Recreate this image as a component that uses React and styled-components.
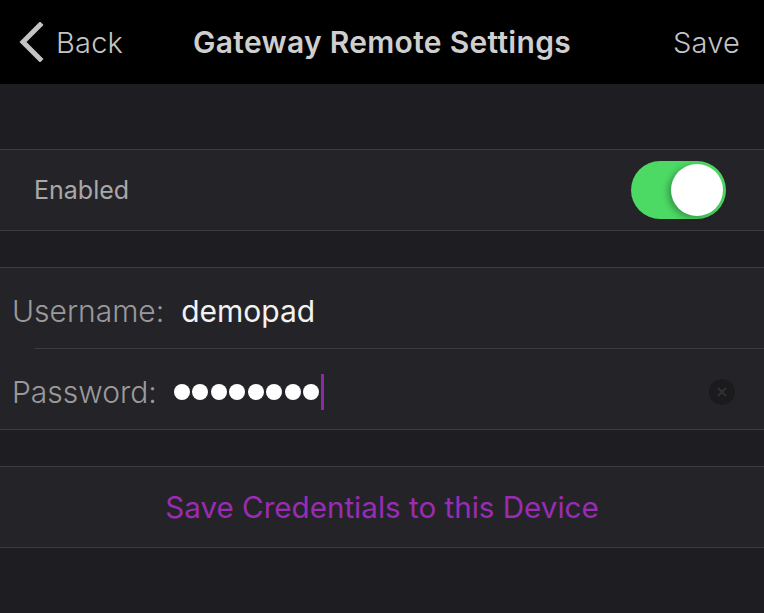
import styled, { createGlobalStyle } from "styled-components";

const GlobalStyle = createGlobalStyle`
  html, body {
    margin: 0;
    padding: 0;
    background: #1e1e22;
    font-family: "Inter", "Liberation Sans", sans-serif;
  }
`;

const Screen = styled.div`
  width: 764px;
  height: 613px;
  overflow: hidden;
  background: #1e1e22;
  display: flex;
  flex-direction: column;
`;

const NavBar = styled.div`
  height: 84px;
  background: #000;
  display: flex;
  align-items: center;
  justify-content: space-between;
  padding: 0 24px 0 18px;
  position: relative;
  color: #c4c4c4;
`;

const NavButton = styled.div`
  display: flex;
  align-items: center;
  gap: 12px;
  font-size: 29px;
  font-weight: 300;
  letter-spacing: 0.2px;
`;

const Title = styled.div`
  position: absolute;
  left: 0;
  right: 0;
  text-align: center;
  font-size: 30px;
  font-weight: 600;
  letter-spacing: 0.3px;
  color: #cfcfcf;
  pointer-events: none;
`;

const Group = styled.div`
  margin-top: ${({ gap }) => gap}px;
  background: #242428;
  border-top: 1px solid #3c3c40;
  border-bottom: 1px solid #3c3c40;
`;

const Row = styled.div`
  height: 80px;
  box-sizing: border-box;
  display: flex;
  align-items: center;
  padding: ${({ pad }) => pad || "0 12px"};
  justify-content: ${({ center }) => (center ? "center" : "flex-start")};
`;

const Separator = styled.div`
  height: 1px;
  margin-left: 34px;
  background: #3c3c40;
`;

const CellLabel = styled.span`
  font-size: 25px;
  color: #a8a8a8;
  flex: 1;
`;

const FieldLabel = styled.span`
  font-size: 30px;
  font-weight: 300;
  color: #9a9a9e;
  margin-right: ${({ space }) => space}px;
`;

const FieldValue = styled.span`
  font-size: 30px;
  color: #f2f2f2;
`;

const Dots = styled.span`
  display: flex;
  gap: 2.5px;
  align-items: center;
`;

const Dot = styled.span`
  width: 16px;
  height: 16px;
  border-radius: 50%;
  background: #fff;
`;

const Caret = styled.span`
  width: 3px;
  height: 36px;
  margin-left: 2px;
  background: #8a2aa8;
`;

const Toggle = styled.div`
  width: 95px;
  height: 58px;
  border-radius: 29px;
  background: #4cd964;
  position: relative;
  margin-right: 26px;
  & > span {
    position: absolute;
    top: 3px;
    right: 3px;
    width: 52px;
    height: 52px;
    border-radius: 50%;
    background: #fff;
    box-shadow: -3px 2px 6px rgba(0, 0, 0, 0.3);
  }
`;

const ClearButton = styled.div`
  margin-left: auto;
  margin-right: 17px;
  width: 26px;
  height: 26px;
  border-radius: 50%;
  background: #161618;
  display: flex;
  align-items: center;
  justify-content: center;
  opacity: 0.6;
`;

const ActionText = styled.span`
  font-size: 29.6px;
  color: #9a2cb4;
`;

const App = () => {
  return (
    <Screen>
      <GlobalStyle />
      <NavBar>
        <NavButton>
          <svg width="26" height="40" viewBox="0 0 26 40">
            <path d="M22 3 L5 20 L22 37" fill="none" stroke="#c4c4c4" strokeWidth="5" strokeLinecap="square" />
          </svg>
          <span>Back</span>
        </NavButton>
        <Title>Gateway Remote Settings</Title>
        <NavButton>Save</NavButton>
      </NavBar>

      <Group gap={65}>
        <Row pad="0 12px 0 34px">
          <CellLabel>Enabled</CellLabel>
          <Toggle>
            <span />
          </Toggle>
        </Row>
      </Group>

      <Group gap={36}>
        <Row pad="5px 12px 0">
          <FieldLabel space={17}>Username:</FieldLabel>
          <FieldValue>demopad</FieldValue>
        </Row>
        <Separator />
        <Row pad="5px 12px 0">
          <FieldLabel space={17}>Password:</FieldLabel>
          <Dots>
            {Array.from({ length: 8 }).map((_, i) => (
              <Dot key={i} />
            ))}
          </Dots>
          <Caret />
          <ClearButton>
            <svg width="12" height="12" viewBox="0 0 12 12">
              <path d="M2 2 L10 10 M10 2 L2 10" stroke="#3a3a3e" strokeWidth="2" />
            </svg>
          </ClearButton>
        </Row>
      </Group>

      <Group gap={36}>
        <Row center>
          <ActionText>Save Credentials to this Device</ActionText>
        </Row>
      </Group>
    </Screen>
  );
};

export default App;
